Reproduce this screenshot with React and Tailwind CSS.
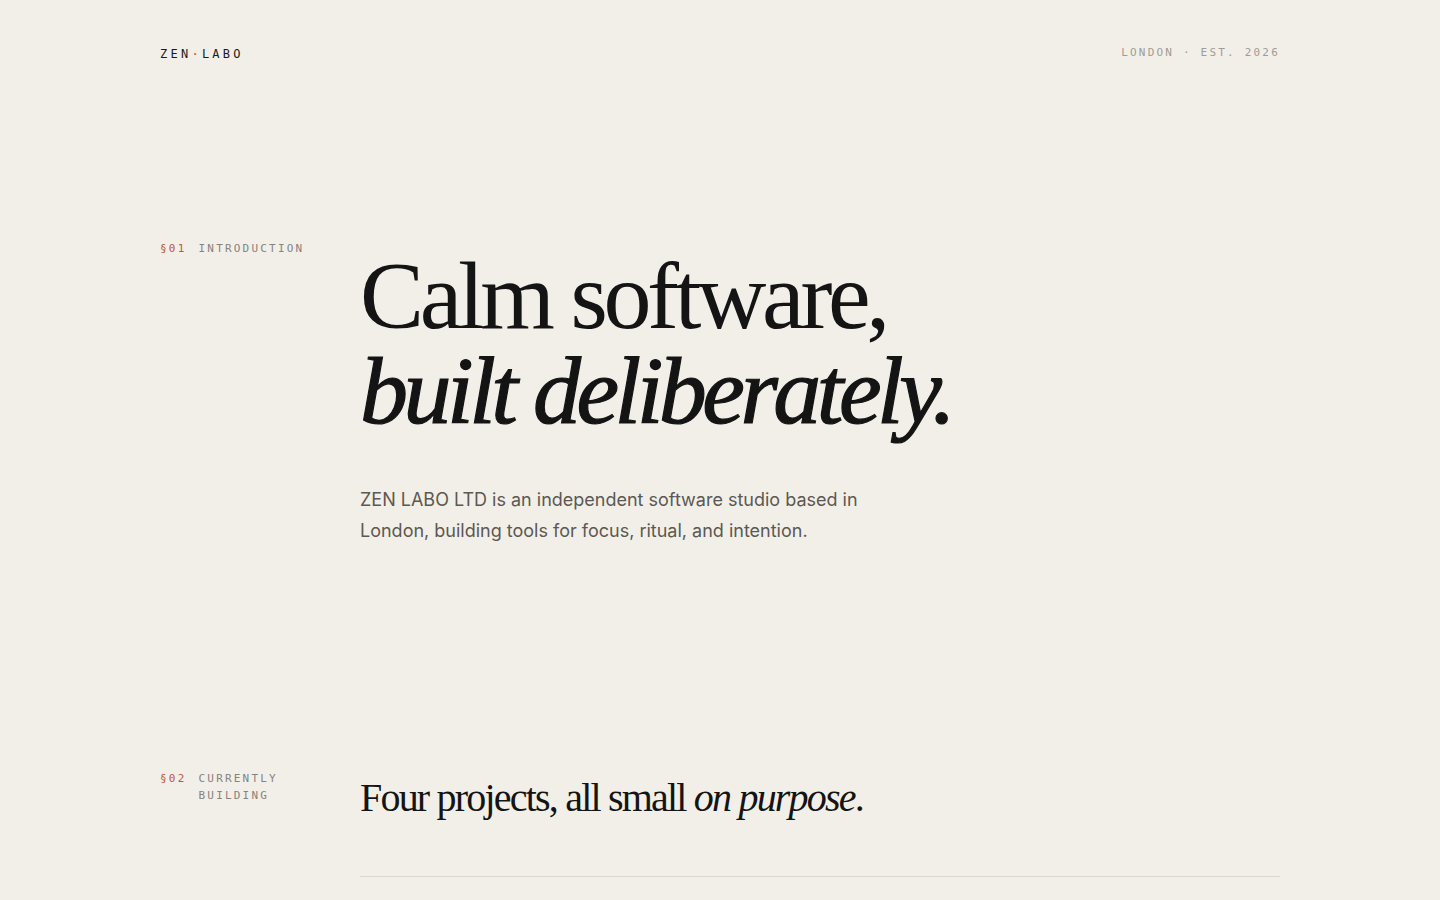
import React from "react";

const mono = "font-['DejaVu_Sans_Mono','Liberation_Mono',monospace]";
const serif = "font-['Liberation_Serif','Times_New_Roman',serif]";

const SectionLabel = ({ num, lines }) => (
  <div className={`flex gap-3 text-[11px] leading-[17px] tracking-[0.2em] uppercase ${mono}`}>
    <span className="text-[#c0573d]">§{num}</span>
    <span className="text-[#86837d]">
      {lines.map((l) => (
        <span key={l} className="block">
          {l}
        </span>
      ))}
    </span>
  </div>
);

export default function App() {
  return (
    <div className="min-h-[900px] bg-[#f2efe9] font-['Inter',sans-serif] text-[#141414]">
      <div className="mx-auto w-[1120px]">
        <header className={`flex items-center justify-between pt-[46px] ${mono}`}>
          <div className="text-[12px] leading-4 tracking-[0.27em] text-[#1a1a1a]">
            ZEN<span className="text-[#c0573d]">·</span>LABO
          </div>
          <div className="-mt-[2px] text-[11px] leading-4 tracking-[0.2em] text-[#a09c95]">
            LONDON · EST. 2026
          </div>
        </header>

        <section className="mt-[178px] grid grid-cols-[200px_1fr]">
          <div>
            <SectionLabel num="01" lines={["Introduction"]} />
          </div>
          <div>
            <h1 className={`mt-2 text-[96px] leading-[95px] tracking-[-0.045em] ${serif}`}>
              <span className="block font-normal">Calm software,</span>
              <span className="block font-normal italic tracking-[-0.047em] [-webkit-text-stroke:1.2px_#141414]">
                built deliberately.
              </span>
            </h1>
            <p className="mt-[46px] max-w-[530px] text-[18px] leading-[31px] text-[#5c5852]">
              ZEN LABO LTD is an independent software studio based in London, building
              tools for focus, ritual, and intention.
            </p>
          </div>
        </section>

        <section className="mt-[224px] grid grid-cols-[200px_1fr]">
          <div>
            <SectionLabel num="02" lines={["Currently", "Building"]} />
          </div>
          <div>
            <h2 className={`mt-[4px] text-[40px] leading-[48px] tracking-[-0.045em] ${serif}`}>
              Four projects, all small <em className="italic">on purpose</em>.
            </h2>
            <div className="mt-[54px] border-t border-[#dcd8d0]" />
          </div>
        </section>
      </div>
    </div>
  );
}
